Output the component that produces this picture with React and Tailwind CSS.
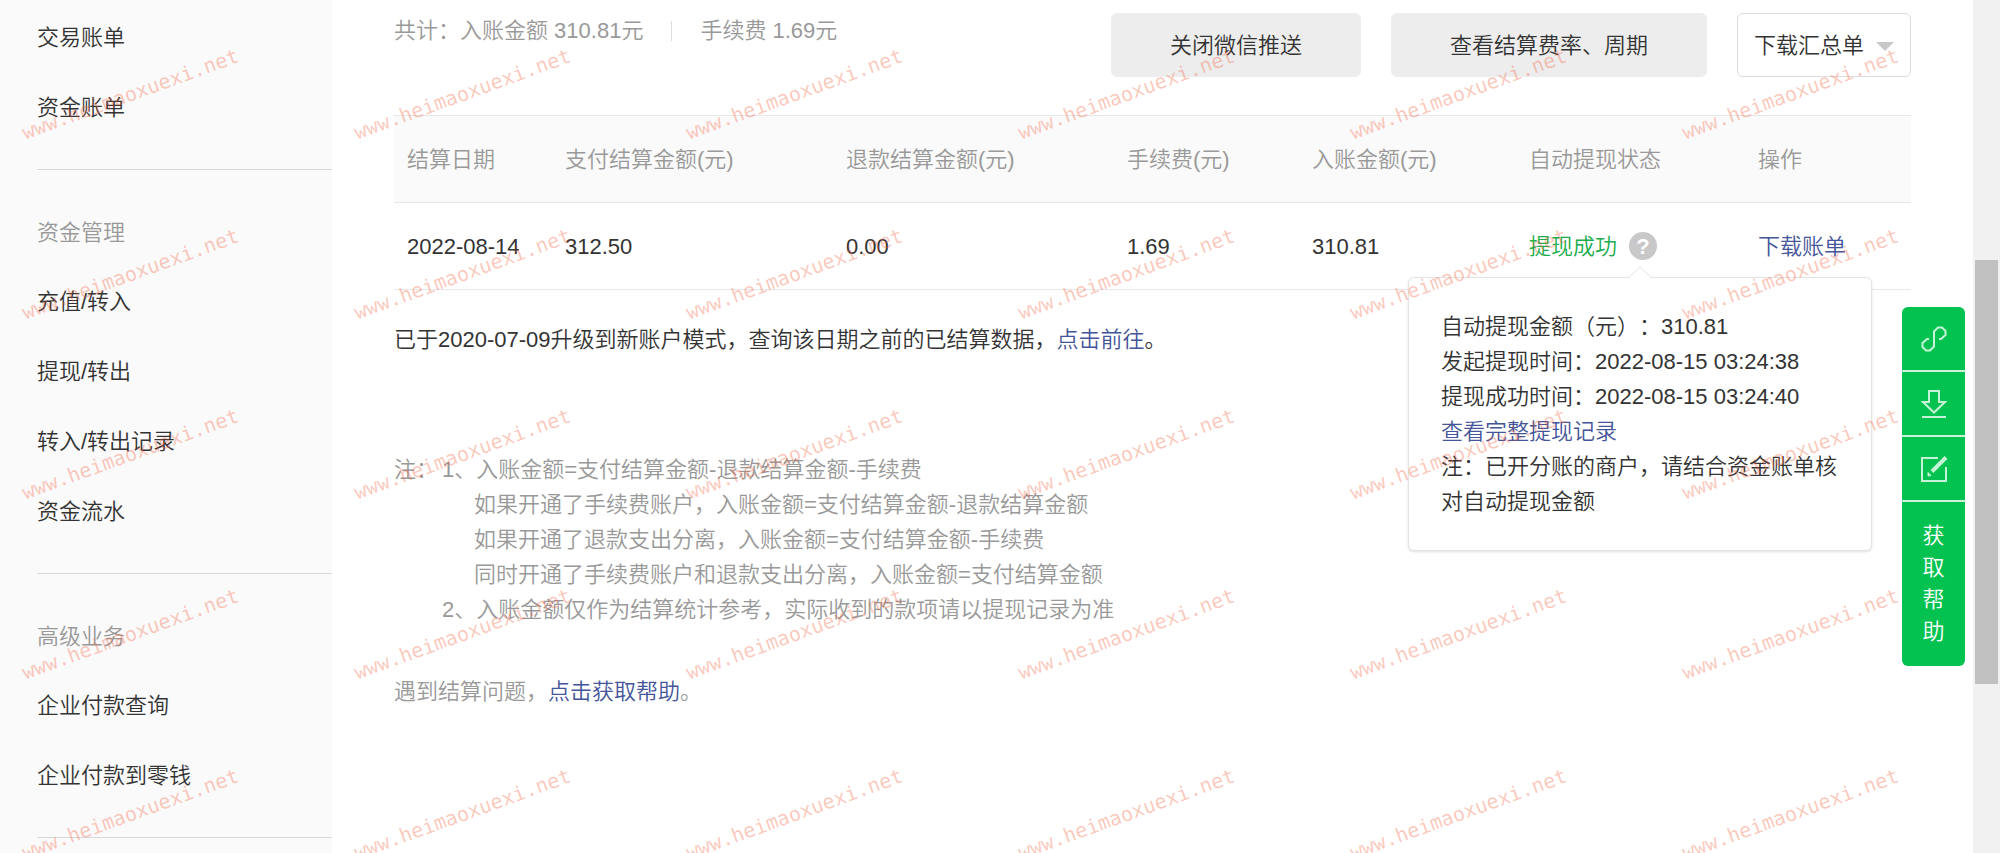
import React from "react";

const menu = [
  { title: null, items: ["交易账单", "资金账单"] },
  { title: "资金管理", items: ["充值/转入", "提现/转出", "转入/转出记录", "资金流水"] },
  { title: "高级业务", items: ["企业付款查询", "企业付款到零钱"] },
];

const Sidebar = () => (
  <nav className="w-[332px] shrink-0 bg-[#fafafa] pl-[37px]">
    {menu.map((group, i) => (
      <div
        key={i}
        className={`border-b border-[#d8d8d8] pb-[27px] ${group.title ? "pt-7" : "pt-[2px]"}`}
      >
        {group.title && (
          <h2 className="flex h-[68px] items-center text-[#999]">{group.title}</h2>
        )}
        <ul>
          {group.items.map((item) => (
            <li key={item}>
              <a href="#" className="flex h-[70px] items-center">
                {item}
              </a>
            </li>
          ))}
        </ul>
      </div>
    ))}
  </nav>
);

const WithdrawTip = () => (
  <div className="absolute top-[45px] -left-[221px] z-10 w-[464px] rounded-md border border-[#e4e4e4] bg-white px-8 py-[31px] leading-[35px] whitespace-normal text-[#333] shadow-sm">
    <svg className="absolute -top-3 left-[219px]" width="24" height="13" viewBox="0 0 24 13">
      <path d="M0 13L12 1l12 12z" fill="#fff" />
      <path d="M0 12.5L12 1l12 11.5" fill="none" stroke="#e4e4e4" />
    </svg>
    <p>自动提现金额（元）：310.81</p>
    <p>发起提现时间：2022-08-15 03:24:38</p>
    <p>提现成功时间：2022-08-15 03:24:40</p>
    <p>
      <a href="#" className="text-[#459]">查看完整提现记录</a>
    </p>
    <p>注：已开分账的商户，请结合资金账单核对自动提现金额</p>
  </div>
);

const SettlementTable = () => (
  <table className="mt-[38px] w-full table-fixed border-t border-[#e7e7e7] text-left whitespace-nowrap">
    <colgroup>
      <col className="w-[158px]" />
      <col className="w-[281px]" />
      <col className="w-[281px]" />
      <col className="w-[185px]" />
      <col className="w-[217px]" />
      <col className="w-[229px]" />
      <col />
    </colgroup>
    <thead>
      <tr className="h-[87px] border-b border-[#e7e7e7] bg-[#fafafa] text-[#999]">
        {["结算日期", "支付结算金额(元)", "退款结算金额(元)", "手续费(元)", "入账金额(元)", "自动提现状态", "操作"].map(
          (label) => (
            <th key={label} scope="col" className="pl-[13px] font-[350]">
              {label}
            </th>
          )
        )}
      </tr>
    </thead>
    <tbody>
      <tr className="h-[87px] border-b border-[#e7e7e7]">
        <td className="pl-[13px]">2022-08-14</td>
        <td className="pl-[13px]">312.50</td>
        <td className="pl-[13px]">0.00</td>
        <td className="pl-[13px]">1.69</td>
        <td className="pl-[13px]">310.81</td>
        <td className="pl-[13px]">
          <div className="flex items-center gap-3 text-[#1aad4b]">
            提现成功
            <div className="relative">
              <button
                type="button"
                aria-label="提现说明"
                className="flex size-7 items-center justify-center rounded-full bg-[#c8c8c8] font-bold text-white"
              >
                ?
              </button>
              <WithdrawTip />
            </div>
          </div>
        </td>
        <td className="pl-[13px]">
          <a href="#" className="text-[#459]">下载账单</a>
        </td>
      </tr>
    </tbody>
  </table>
);

const FloatingTools = () => (
  <div className="absolute top-[307px] right-[35px] flex w-[63px] flex-col gap-[2px] overflow-hidden rounded-md bg-[#c9f2d8] text-white">
    <button type="button" aria-label="链接" className="flex h-[63px] items-center justify-center bg-[#04c250]">
      <svg width="26" height="26" viewBox="0 0 26 26" fill="none" stroke="#c4f3d5" strokeWidth="2">
        <path d="M8 13H6l-4.500 4v4L5 24.500h4l4-4v-15L17 1.500h4L24.500 5v4L20 13h-2" />
      </svg>
    </button>
    <button type="button" aria-label="下载" className="flex h-[63px] items-center justify-center bg-[#04c250]">
      <svg width="26" height="28" viewBox="0 0 26 28" fill="none" stroke="#c4f3d5" strokeWidth="2">
        <path d="M8 1h10v11h6L13 22.500 2 12h6zM1 27h24" />
      </svg>
    </button>
    <button type="button" aria-label="反馈" className="flex h-[63px] items-center justify-center bg-[#04c250]">
      <svg width="26" height="26" viewBox="0 0 26 26" fill="none" stroke="#c4f3d5" strokeWidth="2">
        <path d="M17 2H1v23h24V11" />
        <path d="M11 15.500L25 1.500" strokeWidth="4" />
        <path d="M7 16.500l3 3-3 .5z" fill="#c4f3d5" strokeWidth="1" />
      </svg>
    </button>
    <button type="button" className="bg-[#04c250] px-5 py-[18px] leading-8">
      获取帮助
    </button>
  </div>
);

const Watermark = () => (
  <div
    aria-hidden="true"
    className="pointer-events-none absolute inset-0 z-20 grid auto-rows-[180px] grid-cols-[repeat(6,332px)] overflow-hidden font-['DejaVu_Sans_Mono'] text-xl text-[#f5603c]/35"
  >
    {Array.from({ length: 30 }, (_, i) => (
      <div key={i} className="pt-20 pl-4">
        <span className="inline-block -rotate-20">www.heimaoxuexi.net</span>
      </div>
    ))}
  </div>
);

const App = () => {
  return (
    <div className="relative flex min-h-screen overflow-hidden bg-white font-['Liberation_Sans','Noto_Sans_CJK_SC',sans-serif] text-[22px] leading-[35px] font-[350] text-[#333] [text-spacing-trim:space-all]">
      <Sidebar />

      <main className="min-w-0 flex-1 px-[62px] pt-[13px]">
        <div className="flex items-start justify-between">
          <div className="flex items-center text-[#999]">
            <span>共计：入账金额 310.81元</span>
            <span className="mx-7 h-5 w-px bg-[#ddd]" />
            <span>手续费 1.69元</span>
          </div>
          <div className="flex gap-[30px]">
            <button type="button" className="h-16 rounded-md bg-[#ededed] px-[59px]">
              关闭微信推送
            </button>
            <button type="button" className="h-16 rounded-md bg-[#ededed] px-[59px]">
              查看结算费率、周期
            </button>
            <div className="relative">
              <select
                aria-label="下载汇总单"
                className="h-16 w-[174px] appearance-none rounded-md border border-[#dcdcdc] bg-white pl-4"
              >
                <option>下载汇总单</option>
              </select>
              <svg
                className="pointer-events-none absolute top-[29px] right-[17px]"
                width="18"
                height="9"
                viewBox="0 0 18 9"
              >
                <path d="M0 0h18L9 9z" fill="#c8c8c8" />
              </svg>
            </div>
          </div>
        </div>

        <SettlementTable />

        <p className="mt-8">
          已于2020-07-09升级到新账户模式，查询该日期之前的已结算数据，
          <a href="#" className="text-[#459]">点击前往</a>。
        </p>

        <div className="mt-[95px] flex text-[#999]">
          <span className="w-12 shrink-0">注：</span>
          <ol>
            <li>
              1、入账金额=支付结算金额-退款结算金额-手续费
              <div className="pl-8">
                <p>如果开通了手续费账户，入账金额=支付结算金额-退款结算金额</p>
                <p>如果开通了退款支出分离，入账金额=支付结算金额-手续费</p>
                <p>同时开通了手续费账户和退款支出分离，入账金额=支付结算金额</p>
              </div>
            </li>
            <li>2、入账金额仅作为结算统计参考，实际收到的款项请以提现记录为准</li>
          </ol>
        </div>

        <p className="mt-[47px] text-[#999]">
          遇到结算问题，
          <a href="#" className="text-[#459]">点击获取帮助</a>。
        </p>
      </main>

      <div className="w-[27px] shrink-0 bg-[#f1f1f1] px-[2px] pt-[260px]">
        <div className="h-[424px] bg-[#c1c1c1]" />
      </div>

      <FloatingTools />
      <Watermark />
    </div>
  );
};

export default App;
